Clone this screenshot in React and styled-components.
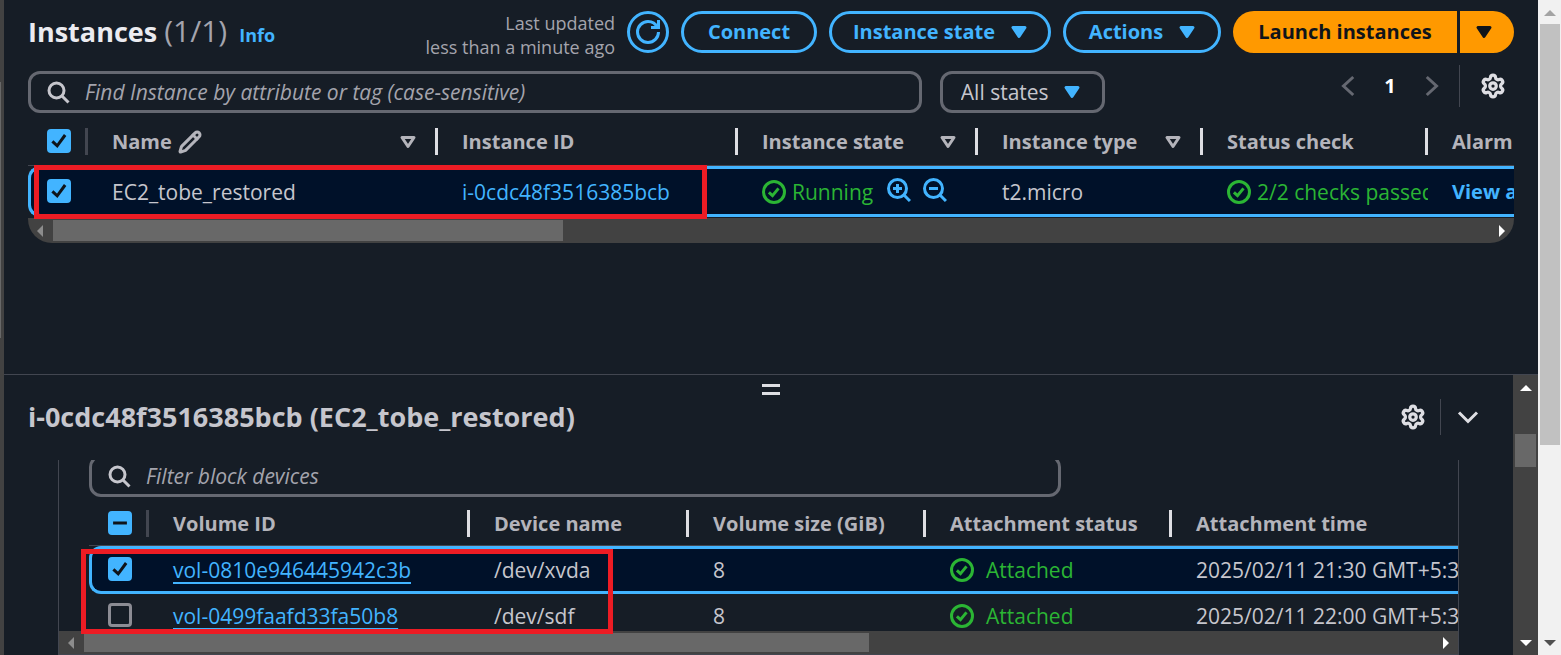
import React from "react";
import styled, { createGlobalStyle } from "styled-components";
import { Settings, Pencil } from "lucide-react";

const color = {
  bg: "#161d26",
  blue: "#42b4ff",
  green: "#2bb534",
  text: "#c6c6cd",
  heading: "#ebebf0",
  muted: "#a4a4ad",
  head: "#b4b4bb",
  line: "#424650",
  field: "#656871",
  selected: "#001129",
  orange: "#ff9900",
  track: "#424242",
  thumb: "#686868",
};

const GlobalStyle = createGlobalStyle`
  *, *::before, *::after { box-sizing: border-box; }
  body {
    margin: 0;
    background: ${color.bg};
    color: ${color.text};
    font-family: "Open Sans", "Noto Sans", sans-serif;
    font-size: 21px;
    line-height: 30px;
  }
  button, input, select { font: inherit; color: inherit; }
  button { margin: 0; padding: 0; border: 0; background: none; cursor: pointer; }
  h1, h2, p { margin: 0; }
  a { color: ${color.blue}; text-decoration: none; }
  svg { display: block; flex: none; }
`;

/* Icons */

const Icon = styled.svg.attrs({ viewBox: "0 0 16 16", "aria-hidden": true })`
  width: 24px;
  height: 24px;
  fill: none;
  stroke: currentColor;
  stroke-width: 2;
`;

const Caret = ({ hollow }) => (
  <Icon strokeLinejoin="round">
    <path d="M4 5h8l-4 6z" fill={hollow ? "none" : "currentColor"} />
  </Icon>
);

const SearchIcon = () => (
  <Icon>
    <circle cx="7" cy="7" r="5" />
    <path d="m15 15-4.5-4.5" />
  </Icon>
);

const RefreshIcon = () => (
  <Icon>
    <path d="M15 8c0 3.87-3.13 7-7 7s-7-3.13-7-7 3.13-7 7-7c2.79 0 5.2 1.63 6.33 4" />
    <path d="M10 5h5V0" />
  </Icon>
);

const OkIcon = () => (
  <Icon>
    <circle cx="8" cy="8" r="7" />
    <path d="m4.6 8.2 2.4 2.2 4-4.8" />
  </Icon>
);

const ZoomIcon = ({ plus }) => (
  <Icon>
    <circle cx="7" cy="7" r="6" />
    <path d="m11.3 11.3 4 4M4 7h6" />
    {plus && <path d="M7 4v6" />}
  </Icon>
);

const Chevron = ({ d }) => (
  <Icon>
    <path d={d} />
  </Icon>
);

/* Page frame */

const Page = styled.div`
  display: flex;
  min-height: 100vh;
`;

const NavEdge = styled.div`
  width: 4px;
  padding-top: 82px;
  background: ${color.track};
`;

const NavEdgeThumb = styled.div`
  width: 1px;
  height: 256px;
  background: ${color.thumb};
`;

const Main = styled.main`
  flex: 1;
  min-width: 0;
  display: flex;
  flex-direction: column;
`;

const VBar = styled.div`
  width: ${(p) => (p.$light ? 23 : 25)}px;
  flex: none;
  display: flex;
  flex-direction: column;
  align-items: center;
  padding: ${(p) => (p.$light ? "10px 1px 9px 2px" : "10px 2px 9px")};
  background: ${(p) => (p.$light ? "#f1f1f1" : color.track)};
`;

const VArrow = styled.span`
  border: 6px solid transparent;
  border-top-width: ${(p) => (p.$up ? 0 : 6)}px;
  border-bottom-width: ${(p) => (p.$up ? 6 : 0)}px;
  border-${(p) => (p.$up ? "bottom" : "top")}-color: ${(p) => p.$color};
`;

const VThumb = styled.span`
  width: 100%;
  height: ${(p) => p.$size}px;
  margin: ${(p) => p.$offset}px 0 auto;
  background: ${(p) => (p.$light ? "#c1c1c1" : color.thumb)};
`;

const HBar = styled.div`
  display: flex;
  align-items: center;
  height: ${(p) => (p.$rounded ? 25 : 23)}px;
  padding: 2px 9px;
  background: ${color.track};
  border-radius: ${(p) => (p.$rounded ? "0 0 24px 24px" : "0")};
`;

const HArrow = styled.span`
  border: 6px solid transparent;
  border-left-width: ${(p) => (p.$right ? 6 : 0)}px;
  border-right-width: ${(p) => (p.$right ? 0 : 6)}px;
  border-${(p) => (p.$right ? "left" : "right")}-color: ${(p) => (p.$right ? "#ffffff" : "#8c8c8c")};
`;

const HThumbLane = styled.span`
  flex: 1;
  align-self: stretch;
  margin: 0 10px;
`;

const HThumb = styled.span`
  display: block;
  width: ${(p) => p.$share}%;
  height: 100%;
  background: ${color.thumb};
`;

const HScroll = ({ share, rounded }) => (
  <HBar $rounded={rounded} aria-hidden="true">
    <HArrow />
    <HThumbLane>
      <HThumb $share={share} />
    </HThumbLane>
    <HArrow $right />
  </HBar>
);

/* Instances pane */

const InstancesPane = styled.section`
  position: relative;
  flex: 1;
  padding: 11px 24px 0;
`;

const HeaderRow = styled.header`
  display: flex;
  align-items: center;
  gap: 12px;
  height: 42px;
`;

const Title = styled.h1`
  padding-bottom: 2px;
  font-size: 27px;
  line-height: 42px;
  color: ${color.heading};
`;

const Count = styled.span`
  font-size: 30px;
  font-weight: 400;
  color: ${color.muted};
`;

const InfoLink = styled.a`
  padding-top: 6px;
  font-size: 18px;
  font-weight: 700;
`;

const Updated = styled.p`
  margin-left: auto;
  padding-top: 5px;
  text-align: right;
  font-size: 18px;
  line-height: 24px;
  color: ${color.muted};
  white-space: nowrap;
`;

const PillButton = styled.button`
  display: flex;
  align-items: center;
  justify-content: center;
  gap: 12px;
  width: ${(p) => p.$width}px;
  height: 42px;
  flex: none;
  padding-left: ${(p) => (p.$menu ? 4 : 0)}px;
  border: 3px solid ${color.blue};
  border-radius: 21px;
  color: ${color.blue};
  font-size: 20px;
  font-weight: 700;
  white-space: nowrap;
`;

const SplitButton = styled.div`
  display: flex;
  gap: 3px;
`;

const LaunchButton = styled(PillButton)`
  border: 0;
  border-radius: ${(p) => (p.$end ? "0 21px 21px 0" : "21px 0 0 21px")};
  padding-right: ${(p) => (p.$end ? 6 : 0)}px;
  background: ${color.orange};
  color: #0f141a;
`;

const FilterRow = styled.div`
  display: flex;
  gap: 18px;
  margin-top: 18px;
`;

const Field = styled.label`
  display: flex;
  align-items: center;
  gap: 15px;
  height: 42px;
  width: ${(p) => p.$share}%;
  padding: 0 15px;
  border: 3px solid ${color.field};
  border-radius: 12px;

  input {
    flex: 1;
    min-width: 0;
    padding: 0;
    border: 0;
    outline: 0;
    background: none;
  }
  input::placeholder {
    color: ${color.muted};
    font-style: italic;
    opacity: 1;
  }
`;

const SelectBox = styled.label`
  display: grid;
  align-items: center;
  width: 165px;
  height: 42px;

  select, svg { grid-area: 1 / 1; }
  select {
    height: 42px;
    padding: 0 18px;
    appearance: none;
    background: none;
    border: 3px solid ${color.field};
    border-radius: 12px;
    outline: 0;
  }
  svg {
    justify-self: end;
    margin-right: 21px;
    color: ${color.blue};
    pointer-events: none;
  }
`;

const Pager = styled.nav`
  display: flex;
  align-items: center;
  height: 30px;
  margin-left: auto;
  padding-right: 9px;
  color: ${color.field};
`;

const PageNumber = styled.button`
  width: 60px;
  color: #ffffff;
  font-size: 20px;
  font-weight: 700;
`;

const PagerRule = styled.span`
  width: 1px;
  height: ${(p) => p.$height}px;
  margin: 0 ${(p) => p.$after}px 0 15px;
  background: ${color.line};
`;

const IconButton = styled.button`
  display: grid;
  place-content: center;
  width: 24px;
  height: 24px;
  color: ${(p) => p.$color || "#dedee3"};
`;

/* Tables */

const TableWrap = styled.div`
  overflow: hidden;
  height: ${(p) => p.$height}px;
`;

const Table = styled.table`
  width: 100%;
  min-width: ${(p) => p.$min}px;
  table-layout: fixed;
  border-collapse: separate;
  border-spacing: 0;
`;

const Th = styled.th`
  height: ${(p) => p.$height}px;
  padding: 5px 0 0 24px;
  border-bottom: 1px solid ${color.line};
  text-align: left;
  color: ${color.head};
  font-size: 20px;
  white-space: nowrap;

  &:first-child { padding-left: 19px; }
`;

const HeadCell = styled.div`
  display: flex;
  align-items: center;
  gap: 6px;
`;

const SortButton = styled(IconButton)`
  margin-left: auto;
  margin-right: 9px;
  color: ${color.head};
`;

const Divider = styled.span`
  width: 3px;
  height: 27px;
  margin-left: auto;
  background: ${(p) => (p.$dim ? color.line : "#dedee3")};

  ${SortButton} + & { margin-left: 0; }
`;

const Td = styled.td`
  height: ${(p) => p.$height}px;
  padding: 0 0 0 24px;
  overflow: hidden;
  white-space: nowrap;

  &:first-child { padding-left: 19px; }
`;

const Row = styled.tr`
  ${(p) =>
    p.$selected &&
    `
    ${Td} {
      background: ${color.selected};
      border-top: 3px solid ${color.blue};
      border-bottom: 3px solid ${color.blue};
    }
    ${Td}:first-child {
      padding-left: 16px;
      border-left: 3px solid ${color.blue};
      border-radius: 12px 0 0 12px;
    }
  `}
`;

const Status = styled.span`
  display: flex;
  align-items: center;
  gap: ${(p) => p.$gap}px;
  color: ${color.green};
`;

const ZoomTools = styled.span`
  display: flex;
  gap: 12px;
  padding: 0 0 4px 8px;
`;

const StrongLink = styled.a`
  font-size: 20px;
  font-weight: 700;
`;

const VolumeLink = styled.a`
  text-decoration: underline;
  text-decoration-thickness: 2px;
  text-decoration-skip-ink: none;
  text-underline-offset: 4px;
`;

const Tick = styled.label`
  display: grid;
  width: 24px;
  height: 24px;
  margin-bottom: 2px;

  input, svg { grid-area: 1 / 1; }
  input {
    width: 24px;
    height: 24px;
    margin: 0;
    appearance: none;
    border: 3px solid #8c8c94;
    border-radius: 4px;
  }
  input:checked, input:indeterminate {
    border-color: ${color.blue};
    background: ${color.blue};
  }
  svg {
    color: #0f141a;
    pointer-events: none;
  }
`;

const Checkbox = ({ label, state }) => (
  <Tick>
    <input
      type="checkbox"
      aria-label={label}
      defaultChecked={state === "on"}
      ref={(el) => {
        if (el) el.indeterminate = state === "mixed";
      }}
    />
    {state === "on" && (
      <Icon>
        <path d="m3.6 8.2 3.2 3 5.3-7.2" />
      </Icon>
    )}
    {state === "mixed" && (
      <Icon>
        <path d="M3.4 8h9.2" />
      </Icon>
    )}
  </Tick>
);

const Highlight = styled.div`
  position: absolute;
  top: ${(p) => p.$top}px;
  left: ${(p) => p.$left}px;
  width: ${(p) => p.$width}px;
  height: ${(p) => p.$height}px;
  border: 5px solid #ed1c24;
  pointer-events: none;
`;

/* Split panel */

const SplitPanel = styled.section`
  display: flex;
  border-top: 1px solid ${color.line};
`;

const PanelBody = styled.div`
  position: relative;
  flex: 1;
  min-width: 0;
`;

const DragHandle = styled.button`
  position: absolute;
  top: 9px;
  right: calc(50% - 21px);
  width: 18px;
  height: 11px;
  border-top: 3px solid #dedee3;
  border-bottom: 3px solid #dedee3;
`;

const PanelHeader = styled.header`
  display: flex;
  align-items: center;
  height: 85px;
  padding: 0 33px 2px 24px;
`;

const PanelTitle = styled.h2`
  margin-right: auto;
  font-size: 27px;
  line-height: 36px;
`;

const DeviceBox = styled.div`
  margin: 0 54px;
  border: 1px solid ${color.line};
  border-top: 0;
`;

const DeviceScroll = styled.div`
  height: 171px;
  padding-left: 30px;
  overflow: hidden;
`;

const DeviceFilter = styled.div`
  margin-top: -5px;
`;

const instanceColumns = [
  { name: "Name", width: 350, edit: true, sort: true },
  { name: "Instance ID", width: 300 },
  { name: "Instance state", width: 240, sort: true },
  { name: "Instance type", width: 225, sort: true },
  { name: "Status check", width: 225 },
  { name: "Alarm", width: 225, last: true },
];

const volumeColumns = [
  { name: "Volume ID", width: 321 },
  { name: "Device name", width: 219 },
  { name: "Volume size (GiB)", width: 237 },
  { name: "Attachment status", width: 246 },
  { name: "Attachment time", width: 321, last: true },
];

const volumes = [
  { id: "vol-0810e946445942c3b", device: "/dev/xvda", size: 8, time: "2025/02/11 21:30 GMT+5:30", on: true },
  { id: "vol-0499faafd33fa50b8", device: "/dev/sdf", size: 8, time: "2025/02/11 22:00 GMT+5:30" },
];

const TableHead = ({ columns, state, height }) => (
  <>
    <colgroup>
      <col width={60} />
      {columns.map((c) => (
        <col key={c.name} width={c.width} />
      ))}
    </colgroup>
    <thead>
      <tr>
        <Th $height={height}>
          <HeadCell>
            <Checkbox label="Select all" state={state} />
            <Divider $dim />
          </HeadCell>
        </Th>
        {columns.map((c) => (
          <Th key={c.name} $height={height}>
            <HeadCell>
              <span>{c.name}</span>
              {c.edit && <Pencil size={24} strokeWidth={3} aria-hidden="true" />}
              {c.sort && (
                <SortButton aria-label={`Sort by ${c.name}`}>
                  <Caret hollow />
                </SortButton>
              )}
              {!c.last && <Divider />}
            </HeadCell>
          </Th>
        ))}
      </tr>
    </thead>
  </>
);

const Instances = () => (
  <InstancesPane>
    <HeaderRow>
      <Title>
        Instances <Count>(1/1)</Count>
      </Title>
      <InfoLink href="#info">Info</InfoLink>
      <Updated>
        Last updated
        <br />
        less than a minute ago
      </Updated>
      <PillButton $width={42} aria-label="Refresh">
        <RefreshIcon />
      </PillButton>
      <PillButton $width={136}>Connect</PillButton>
      <PillButton $width={222} $menu>
        Instance state <Caret />
      </PillButton>
      <PillButton $width={158} $menu>
        Actions <Caret />
      </PillButton>
      <SplitButton>
        <LaunchButton $width={224}>Launch instances</LaunchButton>
        <LaunchButton $width={54} $end aria-label="More launch options">
          <Caret />
        </LaunchButton>
      </SplitButton>
    </HeaderRow>

    <FilterRow>
      <Field $share={60.15}>
        <SearchIcon />
        <input aria-label="Find instance" placeholder="Find Instance by attribute or tag (case-sensitive)" />
      </Field>
      <SelectBox>
        <select aria-label="State filter" defaultValue="all">
          <option value="all">All states</option>
        </select>
        <Caret />
      </SelectBox>
      <Pager aria-label="Pages">
        <IconButton aria-label="Previous page" $color={color.field}>
          <Chevron d="M11.5 2 5 8l6.5 6" />
        </IconButton>
        <PageNumber>1</PageNumber>
        <IconButton aria-label="Next page" $color={color.field}>
          <Chevron d="m4.5 2 6.5 6-6.5 6" />
        </IconButton>
        <PagerRule $height={42} $after={21} />
        <IconButton aria-label="Preferences">
          <Settings size={26} strokeWidth={3} />
        </IconButton>
      </Pager>
    </FilterRow>

    <TableWrap $height={105}>
      <Table $min={1625}>
        <TableHead columns={instanceColumns} state="on" height={53} />
        <tbody>
          <Row $selected>
            <Td $height={51}>
              <Checkbox label="Select EC2_tobe_restored" state="on" />
            </Td>
            <Td>EC2_tobe_restored</Td>
            <Td>
              <a href="#instance">i-0cdc48f3516385bcb</a>
            </Td>
            <Td>
              <Status $gap={6}>
                <OkIcon />
                Running
                <ZoomTools>
                  <IconButton aria-label="Filter for" $color={color.blue}>
                    <ZoomIcon plus />
                  </IconButton>
                  <IconButton aria-label="Filter out" $color={color.blue}>
                    <ZoomIcon />
                  </IconButton>
                </ZoomTools>
              </Status>
            </Td>
            <Td>t2.micro</Td>
            <Td>
              <Status $gap={6}>
                <OkIcon />
                2/2 checks passed
              </Status>
            </Td>
            <Td>
              <StrongLink href="#alarms">View alarms</StrongLink>
            </Td>
          </Row>
        </tbody>
      </Table>
    </TableWrap>
    <HScroll share={35.5} rounded />
    <Highlight $top={165} $left={30} $width={673} $height={54} />
  </InstancesPane>
);

const Details = () => (
  <SplitPanel>
    <PanelBody>
      <DragHandle aria-label="Resize panel" />
      <PanelHeader>
        <PanelTitle>i-0cdc48f3516385bcb (EC2_tobe_restored)</PanelTitle>
        <IconButton aria-label="Panel preferences">
          <Settings size={26} strokeWidth={3} />
        </IconButton>
        <PagerRule $height={36} $after={15} />
        <IconButton aria-label="Close panel">
          <Chevron d="m2 5 6 6 6-6" />
        </IconButton>
      </PanelHeader>
      <DeviceBox>
        <DeviceScroll>
          <DeviceFilter>
            <Field $share={71}>
              <SearchIcon />
              <input aria-label="Filter block devices" placeholder="Filter block devices" />
            </Field>
          </DeviceFilter>
          <Table $min={1404}>
            <TableHead columns={volumeColumns} state="mixed" height={49} />
            <tbody>
              {volumes.map((v) => (
                <Row key={v.id} $selected={v.on}>
                  <Td $height={v.on ? 48 : 43}>
                    <Checkbox label={`Select ${v.id}`} state={v.on ? "on" : "off"} />
                  </Td>
                  <Td>
                    <VolumeLink href="#volume">{v.id}</VolumeLink>
                  </Td>
                  <Td>{v.device}</Td>
                  <Td>{v.size}</Td>
                  <Td>
                    <Status $gap={12}>
                      <OkIcon />
                      Attached
                    </Status>
                  </Td>
                  <Td>{v.time}</Td>
                </Row>
              ))}
            </tbody>
          </Table>
        </DeviceScroll>
        <HScroll share={58.2} />
      </DeviceBox>
      <Highlight $top={174} $left={77} $width={532} $height={85} />
    </PanelBody>
    <VBar aria-hidden="true">
      <VArrow $up $color="#ffffff" />
      <VThumb $offset={43} $size={33} />
      <VArrow $color="#ffffff" />
    </VBar>
  </SplitPanel>
);

export default function App() {
  return (
    <>
      <GlobalStyle />
      <Page>
        <NavEdge aria-hidden="true">
          <NavEdgeThumb />
        </NavEdge>
        <Main>
          <Instances />
          <Details />
        </Main>
        <VBar $light aria-hidden="true">
          <VArrow $up $color="#a3a3a3" />
          <VThumb $light $offset={8} $size={421} />
          <VArrow $color="#505050" />
        </VBar>
      </Page>
    </>
  );
}
